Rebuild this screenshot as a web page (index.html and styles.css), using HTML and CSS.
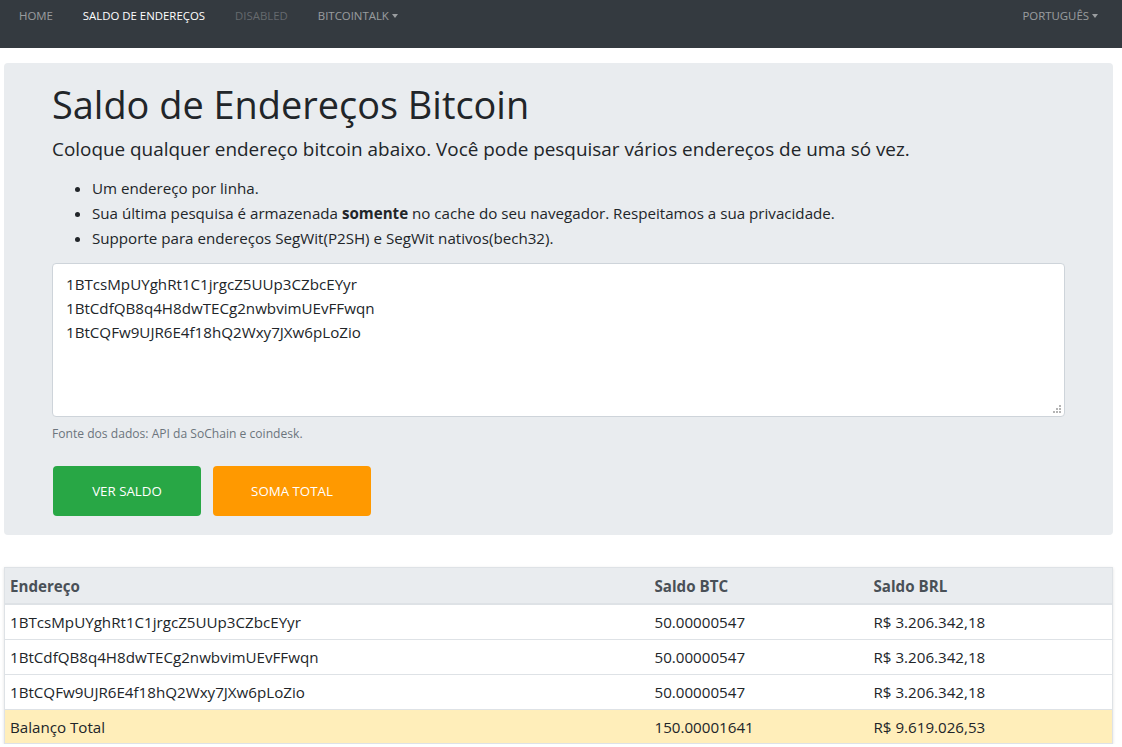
FILE: index.html
```html
<!DOCTYPE html>
<html lang="pt">
<head>
<meta charset="utf-8">
<title>Saldo de Endereços Bitcoin</title>
<link rel="stylesheet" href="styles.css">
</head>
<body>
<nav class="navbar">
  <ul class="nav-left">
    <li><a class="nav-link">Home</a></li>
    <li><a class="nav-link active">Saldo de Endereços</a></li>
    <li><a class="nav-link disabled">Disabled</a></li>
    <li><a class="nav-link dropdown">Bitcointalk<span class="caret"></span></a></li>
  </ul>
  <ul class="nav-right">
    <li><a class="nav-link dropdown">Português<span class="caret"></span></a></li>
  </ul>
</nav>

<section class="jumbotron">
  <h1 class="title">Saldo de Endereços Bitcoin</h1>
  <p class="lead">Coloque qualquer endereço bitcoin abaixo. Você pode pesquisar vários endereços de uma só vez.</p>
  <ul class="notes">
    <li>Um endereço por linha.</li>
    <li>Sua última pesquisa é armazenada <b>somente</b> no cache do seu navegador. Respeitamos a sua privacidade.</li>
    <li>Supporte para endereços SegWit(P2SH) e SegWit nativos(bech32).</li>
  </ul>
  <div class="field">
    <textarea class="addresses">1BTcsMpUYghRt1C1jrgcZ5UUp3CZbcEYyr
1BtCdfQB8q4H8dwTECg2nwbvimUEvFFwqn
1BtCQFw9UJR6E4f18hQ2Wxy7JXw6pLoZio</textarea>
    <svg class="grip" width="10" height="10" viewBox="0 0 10 10" aria-hidden="true">
      <g fill="#b4b4b4">
        <rect x="7" y="1" width="2" height="2"/>
        <rect x="4" y="4" width="2" height="2"/><rect x="7" y="4" width="2" height="2"/>
        <rect x="1" y="7" width="2" height="2"/><rect x="4" y="7" width="2" height="2"/><rect x="7" y="7" width="2" height="2"/>
      </g>
    </svg>
  </div>
  <small class="source">Fonte dos dados: API da SoChain e coindesk.</small>
  <div class="actions">
    <button class="btn btn-green">Ver Saldo</button>
    <button class="btn btn-orange">Soma Total</button>
  </div>
</section>

<table class="balances">
  <thead>
    <tr><th class="col-addr">Endereço</th><th class="col-btc">Saldo BTC</th><th class="col-brl">Saldo BRL</th></tr>
  </thead>
  <tbody>
    <tr><td>1BTcsMpUYghRt1C1jrgcZ5UUp3CZbcEYyr</td><td>50.00000547</td><td>R$ 3.206.342,18</td></tr>
    <tr><td>1BtCdfQB8q4H8dwTECg2nwbvimUEvFFwqn</td><td>50.00000547</td><td>R$ 3.206.342,18</td></tr>
    <tr><td>1BtCQFw9UJR6E4f18hQ2Wxy7JXw6pLoZio</td><td>50.00000547</td><td>R$ 3.206.342,18</td></tr>
    <tr class="total"><td>Balanço Total</td><td>150.00001641</td><td>R$ 9.619.026,53</td></tr>
  </tbody>
</table>
</body>
</html>
```

FILE: styles.css
```css
* { box-sizing: border-box; }

body {
  margin: 0;
  font-family: "Open Sans", "Noto Sans", sans-serif;
  font-size: 15.15px;
  line-height: 24px;
  color: #212529;
  background: #fff;
}

.navbar {
  height: 48px;
  background: #343a40;
  display: flex;
  justify-content: space-between;
  align-items: flex-start;
  padding: 0 24px 0 19px;
}

.nav-left, .nav-right {
  list-style: none;
  margin: 0;
  padding: 0;
  display: flex;
  gap: 30px;
}

.nav-link {
  display: block;
  font-size: 11.4px;
  line-height: 16px;
  padding-top: 8px;
  text-transform: uppercase;
  color: rgba(255,255,255,.5);
  text-decoration: none;
}

.nav-link.active { color: #fff; }
.nav-link.disabled { color: rgba(255,255,255,.25); }

.caret {
  display: inline-block;
  margin-left: 3px;
  vertical-align: 2px;
  border-top: 4px solid;
  border-left: 3.5px solid transparent;
  border-right: 3.5px solid transparent;
}

.jumbotron {
  margin: 15px 9px 0 4px;
  padding: 17px 48px 19px;
  background: #e9ecef;
  border-radius: 4px;
}

.title {
  margin: 0;
  font-size: 37.9px;
  font-weight: 400;
  line-height: 48px;
}

.lead {
  margin: 6px 0 12px;
  font-size: 18.9px;
  font-weight: 400;
  line-height: 30px;
}

.notes {
  margin: 0 0 12px;
  padding-left: 40px;
  line-height: 25px;
}

.field {
  position: relative;
}

.addresses {
  display: block;
  width: 100%;
  height: 154px;
  padding: 8px 13px;
  border: 1px solid #ced4da;
  border-radius: 4px;
  background: #fff;
  font: inherit;
  line-height: 24px;
  color: #212529;
  resize: none;
}

.grip {
  position: absolute;
  right: 3px;
  bottom: 3px;
}

.source {
  display: block;
  margin-top: 8px;
  font-size: 12.1px;
  line-height: 18px;
  color: #6c757d;
}

.actions {
  display: flex;
  gap: 12px;
  margin: 23px 0 0 1px;
}

.btn {
  height: 50px;
  padding: 0;
  border: 0;
  border-radius: 4px;
  font: inherit;
  font-size: 13.3px;
  text-transform: uppercase;
  color: #fff;
}

.btn-green { background: #28a745; width: 148px; }
.btn-orange { background: #ff9900; width: 158px; }

.balances {
  margin: 32px 9px 0 4px;
  width: 1109px;
  border-collapse: collapse;
  border: 1px solid #dee2e6;
  box-shadow: 0 1px 3px rgba(0,0,0,.12);
}

.balances th, .balances td {
  padding: 5px 6px 5px 5px;
  text-align: left;
  border-top: 1px solid #dee2e6;
  line-height: 24px;
}

.balances th {
  background: #e9ecef;
  color: #495057;
  font-weight: 700;
  border-bottom: 2px solid #dee2e6;
  padding-top: 6px;
}

.col-addr { width: 645px; }
.col-btc { width: 219px; }

.total td { background: #ffeeba; padding-bottom: 4px; }
```
